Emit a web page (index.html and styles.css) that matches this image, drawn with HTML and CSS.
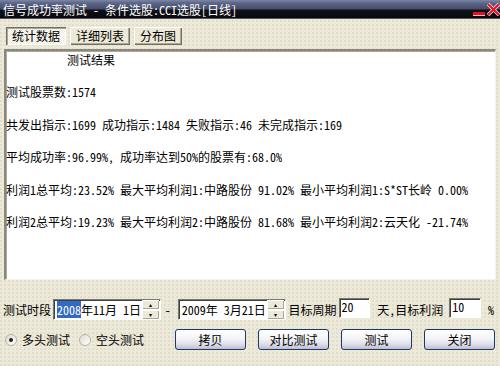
FILE: index.html
```html
<!DOCTYPE html>
<html lang="zh-CN">
<head>
    <meta charset="UTF-8">
    <title>信号成功率测试</title>
    <link rel="stylesheet" href="styles.css">
</head>
<body>
    <div class="window">
        <div class="titlebar">
            <span class="title">信号成功率测试 - 条件选股:CCI选股[日线]</span>
            <div class="caption-btns">
                <svg class="btn-min" width="14" height="16" viewBox="0 0 14 16">
                    <rect x="1" y="12" width="12" height="3" fill="#e8101c"/>
                    <rect x="1" y="15" width="12" height="1" fill="#f4c0c0"/>
                </svg>
                <svg class="btn-close" width="13" height="16" viewBox="0 0 13 16">
                    <path d="M1 4 L12 15 M12 4 L1 15" stroke="#f0f0f0" stroke-width="3.4"/>
                    <path d="M1 4 L12 15 M12 4 L1 15" stroke="#e8101c" stroke-width="2.2"/>
                </svg>
            </div>
        </div>

        <div class="client">
            <div class="tabs">
                <div class="tab active">统计数据</div>
                <div class="tab">详细列表</div>
                <div class="tab">分布图</div>
            </div>

            <div class="result">
                <p class="heading">测试结果</p>
                <p>测试股票数:1574</p>
                <p>共发出指示:1699 成功指示:1484 失败指示:46 未完成指示:169</p>
                <p>平均成功率:96.99%, 成功率达到50%的股票有:68.0%</p>
                <p>利润1总平均:23.52% 最大平均利润1:中路股份 91.02% 最小平均利润1:S*ST长岭 0.00%</p>
                <p>利润2总平均:19.23% 最大平均利润2:中路股份 81.68% 最小平均利润2:云天化 -21.74%</p>
            </div>

            <div class="period-row">
                <span class="label">测试时段</span>
                <div class="datebox">
                    <span class="date-text"><span class="sel">2008</span>年11月 1日</span>
                    <div class="spin">
                        <div class="spin-btn">&#9652;</div>
                        <div class="spin-btn">&#9662;</div>
                    </div>
                </div>
                <span class="dash">-</span>
                <div class="datebox">
                    <span class="date-text">2009年 3月21日</span>
                    <div class="spin">
                        <div class="spin-btn">&#9652;</div>
                        <div class="spin-btn">&#9662;</div>
                    </div>
                </div>
                <span class="label gap-s">目标周期</span>
                <div class="field">20</div>
                <span class="label gap-m">天,目标利润</span>
                <div class="field">10</div>
                <span class="label gap-m">%</span>
            </div>

            <div class="action-row">
                <label class="radio"><span class="dot checked"></span>多头测试</label>
                <label class="radio"><span class="dot"></span>空头测试</label>
                <div class="buttons">
                    <button class="xp-btn">拷贝</button>
                    <button class="xp-btn">对比测试</button>
                    <button class="xp-btn">测试</button>
                    <button class="xp-btn">关闭</button>
                </div>
            </div>
        </div>
    </div>
</body>
</html>
```

FILE: styles.css
```css
body {
    margin: 0;
    font-family: "Noto Sans Mono CJK SC", "Noto Sans CJK SC", sans-serif;
    font-size: 12px;
    color: #000;
}
.window {
    width: 500px;
    height: 366px;
    background-color: #ece9d8;
    background-image: radial-gradient(circle at 1px 1px, #e0ddcc 0.7px, transparent 0.8px);
    background-size: 4px 4px;
    overflow: hidden;
}
.titlebar {
    height: 19px;
    display: flex;
    align-items: center;
    justify-content: space-between;
    background: linear-gradient(to bottom, #7c86a6 0, #5c6686 3px, #444c6c 9px, #101018 10px, #08080e 18px, #55556a 18px);
    color: #fff;
}
.title {
    padding-left: 3px;
    line-height: 20px;
}
.caption-btns {
    display: flex;
    align-items: flex-start;
    height: 19px;
    gap: 1px;
}
.client {
    display: flex;
    flex-direction: column;
}
.tabs {
    display: flex;
    gap: 4px;
    margin: 8px 0 0 6px;
}
.tab {
    height: 18px;
    line-height: 18px;
    padding: 0 6px;
    box-sizing: border-box;
    background-color: #ece9d8;
    box-shadow: inset 1px 1px 0 #fff, inset -1px -1px 0 #716f64, inset -2px -2px 0 #aca899;
}
.tab.active {
    background: repeating-conic-gradient(#fff 0 25%, #ece9d8 0 50%) 0 0 / 2px 2px;
    box-shadow: inset 1px 1px 0 #716f64, inset 2px 2px 0 #aca899, inset -1px -1px 0 #fff;
}
.result {
    margin: 4px 0 0 4px;
    width: 492px;
    height: 231px;
    box-sizing: border-box;
    background-color: #fff;
    border-top: 2px solid #8a887c;
    border-left: 2px solid #8a887c;
    border-right: 1px solid #f4f3ee;
    border-bottom: 1px solid #f4f3ee;
    box-shadow: inset 1px 1px 0 #aca899;
    padding-top: 1px;
}
.result p {
    margin: 0 0 16.4px;
    line-height: 16px;
    white-space: pre;
}
.result .heading {
    padding-left: 61px;
}
.period-row {
    display: flex;
    align-items: center;
    height: 22px;
    margin: 18px 0 0 3px;
}
.label {
    white-space: pre;
}
.gap-s {
    margin: 0 2px 0 3px;
}
.gap-m {
    margin: 0 6px 0 7px;
}
.datebox {
    display: flex;
    align-items: center;
    justify-content: space-between;
    width: 109px;
    height: 21px;
    box-sizing: border-box;
    margin-left: 2px;
    background-color: #fff;
    border-top: 1px solid #7a786c;
    border-left: 1px solid #7a786c;
    border-right: 1px solid #fff;
    border-bottom: 1px solid #fff;
    box-shadow: inset 1px 1px 0 #404040;
}
.date-text {
    padding-left: 3px;
    white-space: pre;
}
.sel {
    background-color: #316ac5;
    color: #fff;
}
.spin {
    display: flex;
    flex-direction: column;
    gap: 1px;
    margin-right: 1px;
}
.spin-btn {
    width: 17px;
    height: 9px;
    font-size: 6px;
    line-height: 9px;
    text-align: center;
    background-color: #ece9d8;
    box-shadow: inset 1px 1px 0 #fff, inset -1px -1px 0 #aca899;
}
.dash {
    margin: 0 5px 0 4px;
}
.field {
    width: 32px;
    height: 20px;
    box-sizing: border-box;
    padding: 1px 0 0 2px;
    line-height: 14px;
    background-color: #fff;
    border-top: 1px solid #7a786c;
    border-left: 1px solid #7a786c;
    border-right: 1px solid #fff;
    border-bottom: 1px solid #fff;
    box-shadow: inset 1px 1px 0 #404040;
    align-self: flex-start;
}
.action-row {
    display: flex;
    align-items: center;
    height: 21px;
    margin: 9px 0 0 5px;
}
.radio {
    display: flex;
    align-items: center;
    gap: 5px;
    margin-right: 9px;
}
.dot {
    width: 12px;
    height: 12px;
    box-sizing: border-box;
    border-radius: 50%;
    border: 1px solid #b4b2a8;
    background: linear-gradient(135deg, #dcdad0, #fff);
    position: relative;
}
.dot.checked::after {
    content: "";
    position: absolute;
    left: 3px;
    top: 3px;
    width: 4px;
    height: 4px;
    border-radius: 50%;
    background-color: #222;
}
.buttons {
    display: flex;
    gap: 12px;
    margin-left: auto;
    margin-right: 5px;
}
.xp-btn {
    width: 71px;
    height: 21px;
    padding: 0;
    font: inherit;
    color: #000;
    border: 1px solid #1c3a68;
    border-radius: 3px;
    background: linear-gradient(to bottom, #ffffff 0%, #f4f4f6 45%, #dedee8 75%, #bebed4 100%);
    cursor: pointer;
}
```
